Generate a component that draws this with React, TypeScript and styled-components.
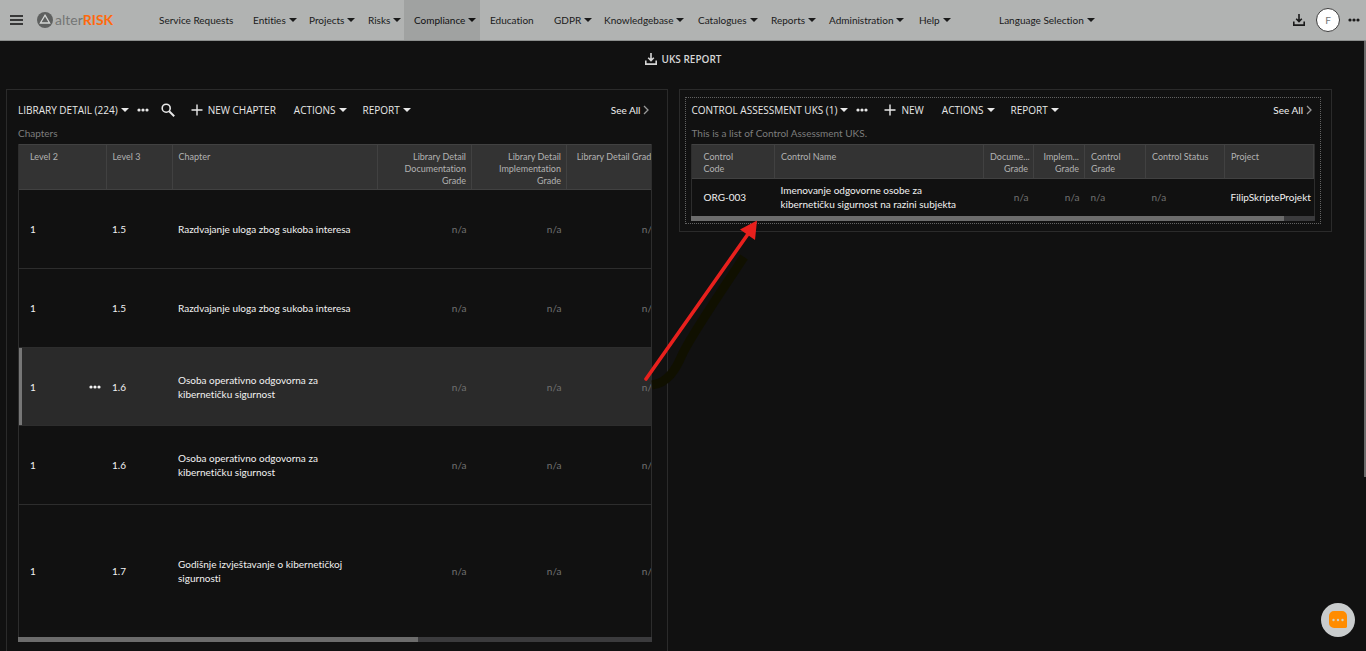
import React from "react";
import styled, { createGlobalStyle, css } from "styled-components";

const GlobalStyle = createGlobalStyle`
  * { box-sizing: border-box; }
  html, body { margin: 0; background: #111111; }
  body, button, table {
    font-family: Lato, "Open Sans", sans-serif;
    font-size: 10px;
    line-height: 14px;
    font-variant-ligatures: none;
  }
  button { border: 0; padding: 0; background: none; color: inherit; cursor: pointer; }
  a { color: inherit; text-decoration: none; }
`;

const Page = styled.div`
  position: relative;
  display: flex;
  flex-direction: column;
  height: 100vh;
  overflow: hidden;
  background: #111111;
  color: #f2f2f2;
`;

const TopBar = styled.header`
  display: flex;
  align-items: center;
  flex: 0 0 41px;
  padding: 0 6px 0 10px;
  background: #b1b3b2;
  border-bottom: 1px solid #8c8e8d;
  color: #1a1a1a;
`;

const IconButton = styled.button`
  display: inline-flex;
  align-items: center;
  justify-content: center;
  flex: none;
`;

const Brand = styled.a`
  display: flex;
  align-items: center;
  gap: 2px;
  width: 112px;
  margin-left: 14px;
  color: #747675;
  font-size: 14px;
  line-height: 20px;
  strong { color: #ff6a0c; }
`;

const BrandName = styled.span`
  white-space: nowrap;
`;

const Nav = styled.nav`
  display: flex;
  align-self: stretch;
  flex: 1;
`;

const NavItem = styled.a<{ $width: number; $active?: boolean }>`
  display: flex;
  align-items: center;
  flex: none;
  gap: 3px;
  width: ${(p) => p.$width}px;
  padding-left: 10px;
  white-space: nowrap;
  ${(p) => p.$active && css`background: #a0a2a1; color: #111111;`}
`;

const Caret = styled.span`
  flex: none;
  width: 0;
  height: 0;
  border: 4px solid transparent;
  border-top-color: currentColor;
  border-bottom: 0;
`;

const Avatar = styled.button`
  width: 24px;
  height: 24px;
  margin: 0 8px 0 11px;
  border: 1px solid #3c3c3c;
  border-radius: 50%;
  background: #ffffff;
  color: #777777;
`;

const ReportBar = styled.div`
  display: flex;
  justify-content: center;
  flex: 0 0 48px;
  padding-top: 11px;
`;

const ReportButton = styled.button`
  display: flex;
  align-items: center;
  gap: 5px;
  height: 14px;
  color: #d6d6d6;
  font-family: "Open Sans", sans-serif;
  font-weight: 600;
`;

const Columns = styled.main`
  display: grid;
  grid-template-columns: 663fr 653fr;
  gap: 11px;
  flex: 1;
  min-height: 0;
  padding: 0 34px 0 6px;
`;

const Panel = styled.section<{ $fill?: boolean }>`
  min-width: 0;
  align-self: ${(p) => (p.$fill ? "stretch" : "start")};
  padding: ${(p) => (p.$fill ? "7px 15px 0 11px" : "7px 10px 7px 5px")};
  border: 1px solid #2b2b2b;
  ${(p) => p.$fill && css`border-bottom: 0;`}
`;

const Focus = styled.div<{ $on?: boolean }>`
  ${(p) => p.$on ? css`
    padding: 0 5px 2px;
    border: 1px dotted #626262;
  ` : css`padding-top: 1px;`}
`;

const Toolbar = styled.div`
  display: flex;
  align-items: center;
  height: 24px;
`;

const ToolButton = styled.button<{ $gap?: number }>`
  display: flex;
  align-items: center;
  flex: none;
  gap: 3px;
  margin-left: ${(p) => p.$gap ?? 0}px;
  color: #e8e8e8;
  font-family: "Open Sans", sans-serif;
  white-space: nowrap;
`;

const AddButton = styled(ToolButton)`
  gap: 5px;
`;

const SeeAll = styled.a`
  display: flex;
  align-items: center;
  gap: 3px;
  margin: 0 3px 0 auto;
`;

const Caption = styled.p`
  margin: 0;
  height: 22px;
  padding-top: 4px;
  color: #7d7d7d;
`;

const Scroller = styled.div`
  overflow: hidden;
  border: 1px solid #2d2d2d;
  border-width: 0 1px;
`;

const Grid = styled.table<{ $width: number }>`
  width: 100%;
  min-width: ${(p) => p.$width}px;
  table-layout: fixed;
  border-collapse: collapse;
`;

const HeadCell = styled.th<{ $right?: boolean; $head: number }>`
  height: ${(p) => p.$head}px;
  padding: 6px 5px 0 6px;
  border: 1px solid #414141;
  border-left: 0;
  background: #333333;
  color: #b2b2b2;
  font-size: 9px;
  line-height: 12px;
  font-weight: 400;
  text-align: ${(p) => (p.$right ? "right" : "left")};
  vertical-align: top;
  white-space: pre;
  &:first-child { padding-left: 11px; }
`;

const Row = styled.tr<{ $height: number; $selected?: boolean }>`
  height: ${(p) => p.$height}px;
  border-bottom: 1px solid #2d2d2d;
  &:last-child { border-bottom: 0; }
  ${(p) => p.$selected && css`
    background: #2a2a2a;
    box-shadow: inset 3px 0 0 #777777;
  `}
`;

const Cell = styled.td<{ $right?: boolean; $muted?: boolean }>`
  padding: 0 5px 0 6px;
  color: ${(p) => (p.$muted ? "#717171" : "#f2f2f2")};
  text-align: ${(p) => (p.$right ? "right" : "left")};
  white-space: pre;
  &:first-child { padding-left: 11px; }
`;

const CellSplit = styled.div`
  display: flex;
  align-items: center;
  justify-content: space-between;
`;

const Track = styled.div`
  height: 5px;
  background: #3b3b3d;
`;

const Thumb = styled.div<{ $share: number }>`
  width: ${(p) => p.$share}%;
  height: 5px;
  background: #6c6c6c;
`;

const PageScroll = styled.div`
  position: absolute;
  top: 41px;
  right: 0;
  width: 2px;
  height: 67%;
  background: #6a6a6a;
`;

const Chat = styled.button`
  position: absolute;
  right: 11px;
  bottom: 14px;
  width: 34px;
  height: 34px;
  border-radius: 50%;
  background: #c9cccd;
  display: flex;
  align-items: center;
  justify-content: center;
`;

const Pointer = styled.svg`
  position: absolute;
  left: 640px;
  top: 215px;
  pointer-events: none;
`;

const Dots = () => (
  <svg width="12" height="4" viewBox="0 0 12 4" fill="currentColor">
    <circle cx="2" cy="2" r="1.6" /><circle cx="6" cy="2" r="1.6" /><circle cx="10" cy="2" r="1.6" />
  </svg>
);

const Download = () => (
  <svg width="12" height="12" viewBox="0 0 12 12" fill="none" stroke="currentColor" strokeWidth="1.6">
    <path d="M6 0v7.4M3.2 4.8 6 7.6l2.8-2.8M.8 7.6v3.5h10.4V7.6" />
  </svg>
);

const Plus = () => (
  <svg width="12" height="12" viewBox="0 0 12 12" stroke="currentColor" strokeWidth="1.4">
    <path d="M6 .5v11M.5 6h11" />
  </svg>
);

const Search = () => (
  <svg width="14" height="14" viewBox="0 0 14 14" fill="none" stroke="currentColor">
    <circle cx="5.2" cy="5.2" r="4" strokeWidth="1.6" /><path d="m8.2 8.2 5 5" strokeWidth="2" />
  </svg>
);

const Chevron = () => (
  <svg width="6" height="10" viewBox="0 0 6 10" fill="none" stroke="#9a9a9a" strokeWidth="1.3">
    <path d="m1 1 4 4-4 4" />
  </svg>
);

const navItems: { label: string; width: number; menu?: boolean; active?: boolean }[] = [
  { label: "Service Requests", width: 94 },
  { label: "Entities", width: 56, menu: true },
  { label: "Projects", width: 59, menu: true },
  { label: "Risks", width: 46, menu: true },
  { label: "Compliance", width: 76, menu: true, active: true },
  { label: "Education", width: 64 },
  { label: "GDPR", width: 50, menu: true },
  { label: "Knowledgebase", width: 94, menu: true },
  { label: "Catalogues", width: 73, menu: true },
  { label: "Reports", width: 58, menu: true },
  { label: "Administration", width: 90, menu: true },
  { label: "Help", width: 80, menu: true },
  { label: "Language Selection", width: 110, menu: true },
];

const chapters = [
  { level: "1.5", name: "Razdvajanje uloga zbog sukoba interesa", height: 79 },
  { level: "1.5", name: "Razdvajanje uloga zbog sukoba interesa", height: 79 },
  { level: "1.6", name: "Osoba operativno odgovorna za\nkibernetičku sigurnost", height: 78, selected: true },
  { level: "1.6", name: "Osoba operativno odgovorna za\nkibernetičku sigurnost", height: 79 },
  { level: "1.7", name: "Godišnje izvještavanje o kibernetičkoj\nsigurnosti", height: 132 },
];

export default function App() {
  return (
    <>
      <GlobalStyle />
      <Page>
        <TopBar>
          <IconButton aria-label="Menu">
            <svg width="13" height="10" viewBox="0 0 13 10" stroke="#111" strokeWidth="1.4">
              <path d="M0 1h13M0 5h13M0 9h13" />
            </svg>
          </IconButton>
          <Brand href="#">
            <svg width="16" height="16" viewBox="0 0 16 16" fill="none">
              <circle cx="8" cy="8" r="8" fill="#5e605f" />
              <path d="M8 3.2 12.6 11H3.4Z" stroke="#d4d6d5" strokeWidth="1.3" />
            </svg>
            <BrandName>alter<strong>RISK</strong></BrandName>
          </Brand>
          <Nav>
            {navItems.map((n) => (
              <NavItem key={n.label} href="#" $width={n.width} $active={n.active}>
                {n.label}
                {n.menu && <Caret />}
              </NavItem>
            ))}
          </Nav>
          <IconButton aria-label="Downloads"><Download /></IconButton>
          <Avatar>F</Avatar>
          <IconButton aria-label="More"><Dots /></IconButton>
        </TopBar>

        <ReportBar>
          <ReportButton><Download />UKS REPORT</ReportButton>
        </ReportBar>

        <Columns>
          <Panel $fill>
            <Focus>
              <Toolbar>
                <ToolButton>LIBRARY DETAIL (224)<Caret /></ToolButton>
                <ToolButton $gap={8} aria-label="More"><Dots /></ToolButton>
                <ToolButton $gap={12} aria-label="Search"><Search /></ToolButton>
                <AddButton $gap={16}><Plus />NEW CHAPTER</AddButton>
                <ToolButton $gap={18}>ACTIONS<Caret /></ToolButton>
                <ToolButton $gap={16}>REPORT<Caret /></ToolButton>
                <SeeAll href="#">See All<Chevron /></SeeAll>
              </Toolbar>
              <Caption>Chapters</Caption>
              <Scroller>
                <Grid $width={643}>
                  <colgroup>
                    <col style={{ width: 87 }} />
                    <col style={{ width: 66 }} />
                    <col />
                    <col style={{ width: 94 }} />
                    <col style={{ width: 95 }} />
                    <col style={{ width: 95 }} />
                  </colgroup>
                  <thead>
                    <tr>
                      <HeadCell $head={45}>Level 2</HeadCell>
                      <HeadCell $head={45}>Level 3</HeadCell>
                      <HeadCell $head={45}>Chapter</HeadCell>
                      <HeadCell $head={45} $right>{"Library Detail\nDocumentation\nGrade"}</HeadCell>
                      <HeadCell $head={45} $right>{"Library Detail\nImplementation\nGrade"}</HeadCell>
                      <HeadCell $head={45} $right>Library Detail Grade</HeadCell>
                    </tr>
                  </thead>
                  <tbody>
                    {chapters.map((c, i) => (
                      <Row key={i} $height={c.height} $selected={c.selected}>
                        <Cell><CellSplit>1{c.selected && <IconButton aria-label="Row menu"><Dots /></IconButton>}</CellSplit></Cell>
                        <Cell>{c.level}</Cell>
                        <Cell>{c.name}</Cell>
                        <Cell $right $muted>n/a</Cell>
                        <Cell $right $muted>n/a</Cell>
                        <Cell $right $muted>n/a</Cell>
                      </Row>
                    ))}
                  </tbody>
                </Grid>
              </Scroller>
              <Track><Thumb $share={63} /></Track>
            </Focus>
          </Panel>

          <Panel>
            <Focus $on>
              <Toolbar>
                <ToolButton>CONTROL ASSESSMENT UKS (1)<Caret /></ToolButton>
                <ToolButton $gap={8} aria-label="More"><Dots /></ToolButton>
                <AddButton $gap={16}><Plus />NEW</AddButton>
                <ToolButton $gap={18}>ACTIONS<Caret /></ToolButton>
                <ToolButton $gap={16}>REPORT<Caret /></ToolButton>
                <SeeAll href="#">See All<Chevron /></SeeAll>
              </Toolbar>
              <Caption>This is a list of Control Assessment UKS.</Caption>
              <Scroller>
                <Grid $width={620}>
                  <colgroup>
                    <col style={{ width: 82 }} />
                    <col />
                    <col style={{ width: 50 }} />
                    <col style={{ width: 51 }} />
                    <col style={{ width: 61 }} />
                    <col style={{ width: 79 }} />
                    <col style={{ width: 89 }} />
                  </colgroup>
                  <thead>
                    <tr>
                      <HeadCell $head={34}>{"Control\nCode"}</HeadCell>
                      <HeadCell $head={34}>Control Name</HeadCell>
                      <HeadCell $head={34} $right>{"Docume...\nGrade"}</HeadCell>
                      <HeadCell $head={34} $right>{"Implem...\nGrade"}</HeadCell>
                      <HeadCell $head={34}>{"Control\nGrade"}</HeadCell>
                      <HeadCell $head={34}>Control Status</HeadCell>
                      <HeadCell $head={34}>Project</HeadCell>
                    </tr>
                  </thead>
                  <tbody>
                    <Row $height={37}>
                      <Cell>ORG-003</Cell>
                      <Cell>{"Imenovanje odgovorne osobe za\nkibernetičku sigurnost na razini subjekta"}</Cell>
                      <Cell $right $muted>n/a</Cell>
                      <Cell $right $muted>n/a</Cell>
                      <Cell $muted>n/a</Cell>
                      <Cell $muted>n/a</Cell>
                      <Cell>FilipSkripteProjekt</Cell>
                    </Row>
                  </tbody>
                </Grid>
              </Scroller>
              <Track><Thumb $share={95} /></Track>
            </Focus>
          </Panel>
        </Columns>

        <Pointer width="130" height="180" viewBox="0 0 130 180" fill="none">
          <path d="M12 170C28 168 36 154 42 140C50 122 84 72 104 42" stroke="#101000" strokeWidth="9" />
          <path d="M6 164 108 19" stroke="#e8201d" strokeWidth="3.600" strokeLinecap="round" />
          <path d="M117 5.500 100 14.500 115 25Z" fill="#e8201d" />
        </Pointer>
        <PageScroll />
        <Chat aria-label="Open chat">
          <svg width="18" height="18" viewBox="0 0 18 18">
            <path d="M5 0h8a5 5 0 0 1 5 5v11a2 2 0 0 1-2 1H5a5 5 0 0 1-5-5V5a5 5 0 0 1 5-5Z" fill="#ff8c00" />
            <g fill="#d5d0c0"><circle cx="4.500" cy="9" r="1.200" /><circle cx="9" cy="9" r="1.200" /><circle cx="13.500" cy="9" r="1.200" /></g>
          </svg>
        </Chat>
      </Page>
    </>
  );
}
